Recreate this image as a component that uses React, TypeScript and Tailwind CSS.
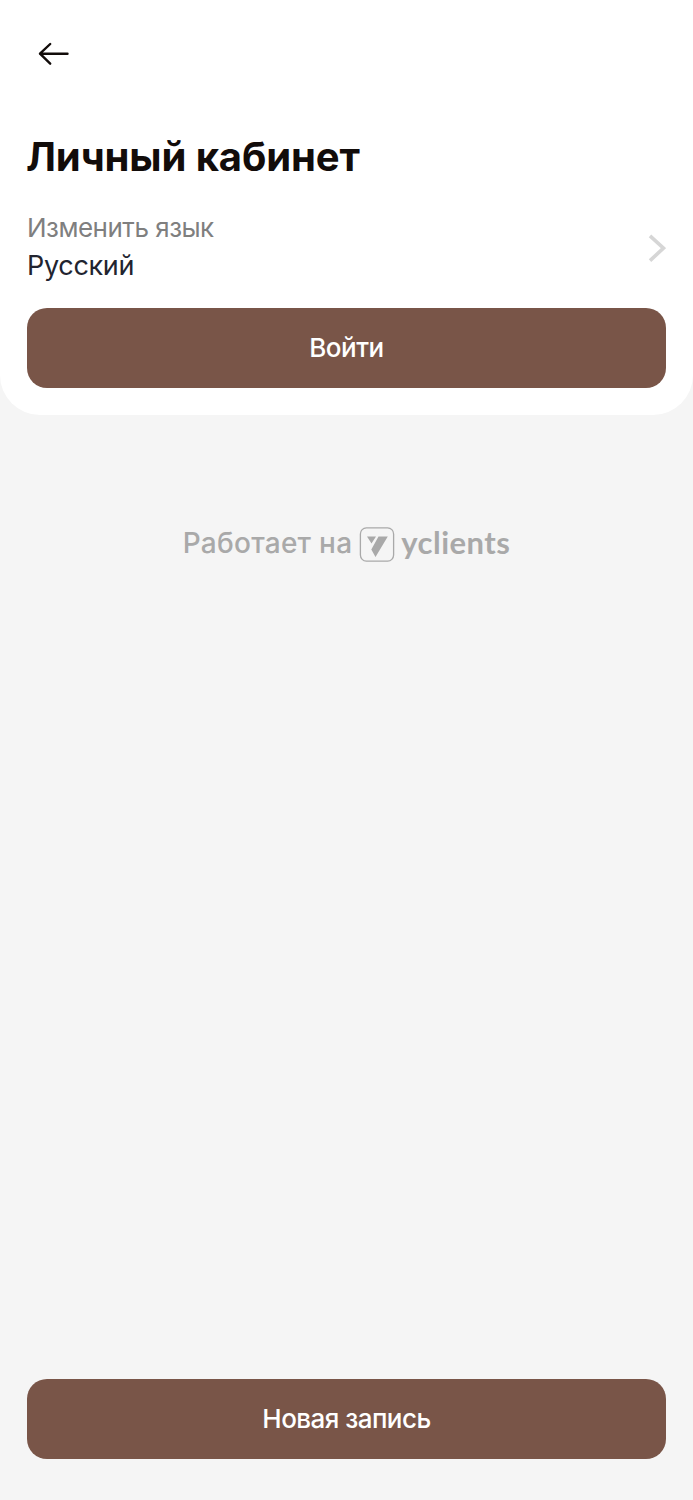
import React from 'react';

function ArrowLeft() {
  return (
    <svg width="32" height="24" viewBox="0 0 32 24" fill="none" stroke="#120c0a" strokeWidth="2.4" strokeLinecap="round" strokeLinejoin="round">
      <path d="M13.2 2 3 11.7l10.2 10M3 11.7H30.500" />
    </svg>
  );
}

function ChevronRight() {
  return (
    <svg width="18" height="28" viewBox="0 0 18 28" fill="none" stroke="#d6d6d6" strokeWidth="3.6">
      <path d="M2 1.8 15.5 14.2 2 26.6" />
    </svg>
  );
}

function LogoMark() {
  return (
    <svg width="36" height="36" viewBox="0 0 36 36" fill="none">
      <rect x="1.4" y="1.9" width="33.2" height="33.2" rx="6" stroke="#a9a9a9" strokeWidth="1.3" />
      <path d="M8 10.500h9l-4.500 7zM19.500 10.500h9.300L16.500 31l-4.200-7.500z" fill="#a9a9a9" />
    </svg>
  );
}

export default function App() {
  return (
    <div className="flex h-[1500px] w-[693px] flex-col bg-[#f5f5f5] font-['Inter',sans-serif]">
      <section className="h-[415px] rounded-b-[40px] bg-white px-[27px]">
        <button className="mt-[42px] ml-[10px] block h-6">
          <ArrowLeft />
        </button>
        <h1 className="mt-[67px] -ml-px text-[40px] leading-[48px] font-bold tracking-[-0.12px] text-[#120c0a]">Личный кабинет</h1>
        <div className="mt-[28px] flex h-[76px] items-center justify-between">
          <div>
            <p className="text-[26px] leading-[38px] tracking-[-0.5px] text-[#7f7f7f]">Изменить язык</p>
            <p className="text-[27px] leading-[38px] tracking-[-0.3px] text-[#222430]">Русский</p>
          </div>
          <span className="pt-px">
            <ChevronRight />
          </span>
        </div>
        <button className="mt-[23px] h-20 w-full rounded-[20px] bg-[#795548] pb-0.5 text-[26px] font-medium tracking-[-0.5px] text-white">Войти</button>
      </section>
      <div className="mt-[111px] flex h-9 items-center justify-center text-[#a9a9a9]">
        <span className="pb-[3px] text-[28px] font-medium tracking-[0.26px]">Работает на</span>
        <span className="mr-[6px] ml-[7px]">
          <LogoMark />
        </span>
        <span className="pb-[5px] font-['Lato',sans-serif] text-[31px] leading-9 font-bold tracking-[0.45px]">yclients</span>
      </div>
      <div className="mt-auto px-[27px] pb-[41px]">
        <button className="block h-20 w-full rounded-[20px] bg-[#795548] pb-0.5 text-[26px] font-medium tracking-[-0.55px] text-white">
          Новая запись
        </button>
      </div>
    </div>
  );
}
